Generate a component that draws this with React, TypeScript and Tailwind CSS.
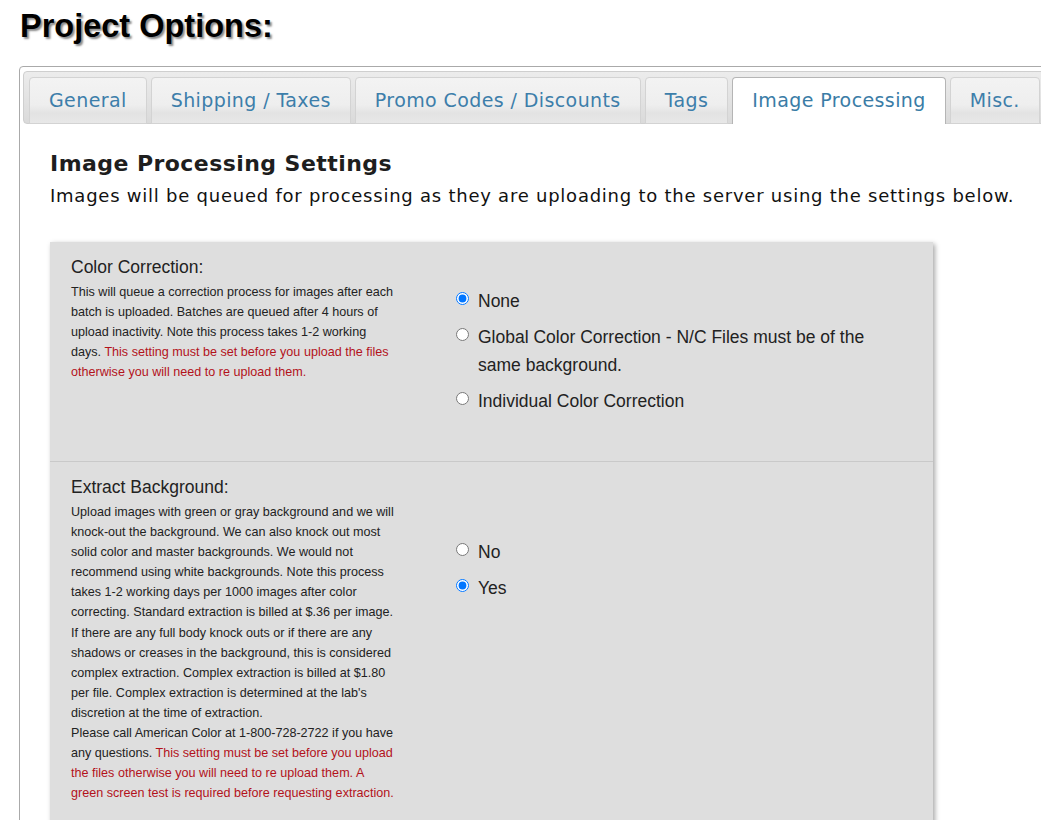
import React from "react";

const tabs = ["General", "Shipping / Taxes", "Promo Codes / Discounts", "Tags", "Image Processing", "Misc."];

function Radio({ name, label, checked }: { name: string; label: React.ReactNode; checked?: boolean }) {
  return (
    <label className="flex items-start text-[17.5px] leading-[28px] text-[#222]">
      <input type="radio" name={name} defaultChecked={checked} className="m-0 mt-[5px] mr-[9px] h-[13px] w-[13px] shrink-0" />
      <span className="max-w-[410px]">{label}</span>
    </label>
  );
}

export default function App() {
  return (
    <div className="h-[820px] overflow-hidden bg-white">
      {/* Page title */}
      <h1 className="pl-[20px] pt-[7px] font-['Liberation_Sans',Arial,sans-serif] text-[32.5px] font-bold leading-[38px] text-black [text-shadow:2px_2px_2px_#8a8a8a]">
        Project Options:
      </h1>

      {/* Tabs widget */}
      <div className="mt-[21px] ml-[19px] w-[1040px] rounded-[4px] border border-[#aaaaaa] px-[3px] pt-[4px]">
        <ul className="flex gap-[4px] rounded-[4px] border border-[#cfcfcf] bg-[linear-gradient(#ececec,#dadada)] px-[5px] pt-[5px] font-['DejaVu_Sans',Verdana,sans-serif] tracking-[0.4px]">
          {tabs.map((t) => {
            const active = t === "Image Processing";
            return (
              <li
                key={t}
                className={
                  active
                    ? "-mb-[1px] rounded-t-[4px] border border-b-0 border-[#b5b5b5] bg-white px-[19px] pt-[11px] pb-[13px] text-[19px] leading-[22px] text-[#3a7ca6]"
                    : "-mb-[1px] rounded-t-[4px] border border-[#d3d3d3] bg-[linear-gradient(#f3f3f3_0%,#eeeeee_60%,#e3e3e3_78%,#e8e8e8_100%)] px-[19px] py-[11px] text-[19px] leading-[22px] text-[#3d7eaa]"
                }
              >
                {t}
              </li>
            );
          })}
        </ul>

        {/* Panel content */}
        <div className="pl-[27px] pt-[27px]">
          <h2 className="mb-[8px] font-['DejaVu_Sans',Verdana,sans-serif] text-[22px] font-bold leading-[26px] tracking-[0.44px] text-[#1e1e1e]">
            Image Processing Settings
          </h2>
          <p className="whitespace-nowrap font-['DejaVu_Sans',Verdana,sans-serif] text-[18px] leading-[21px] tracking-[0.76px] text-[#111]">
            Images will be queued for processing as they are uploading to the server using the settings below.
          </p>

          <div className="mt-[36px] w-[883px] bg-[#dedede] font-['Liberation_Sans',Arial,sans-serif] shadow-[2px_2px_5px_rgba(0,0,0,0.35)]">
            {/* Color Correction */}
            <div className="flex min-h-[220px] border-b border-[#c9c9c9]">
              <div className="w-[406px] shrink-0 pl-[21px] pt-[15px]">
                <div className="mb-[5px] text-[17.5px] leading-[20px] text-[#222]">Color Correction:</div>
                <p className="whitespace-nowrap text-[12.6px] leading-[20px] text-[#222]">
                  This will queue a correction process for images after each<br />
                  batch is uploaded. Batches are queued after 4 hours of<br />
                  upload inactivity. Note this process takes 1-2 working<br />
                  days. <span className="text-[#b3121b]">This setting must be set before you upload the files<br />
                  otherwise you will need to re upload them.</span>
                </p>
              </div>
              <div className="flex flex-col gap-[8px] pt-[45px]">
                <Radio name="color" label="None" checked />
                <Radio name="color" label="Global Color Correction - N/C Files must be of the same background." />
                <Radio name="color" label="Individual Color Correction" />
              </div>
            </div>

            {/* Extract Background */}
            <div className="flex pb-[30px]">
              <div className="w-[406px] shrink-0 pl-[21px] pt-[15px]">
                <div className="mb-[5px] text-[17.5px] leading-[20px] text-[#222]">Extract Background:</div>
                <p className="whitespace-nowrap text-[12.6px] leading-[20.1px] text-[#222]">
                  Upload images with green or gray background and we will<br />
                  knock-out the background. We can also knock out most<br />
                  solid color and master backgrounds. We would not<br />
                  recommend using white backgrounds. Note this process<br />
                  takes 1-2 working days per 1000 images after color<br />
                  correcting. Standard extraction is billed at $.36 per image.<br />
                  If there are any full body knock outs or if there are any<br />
                  shadows or creases in the background, this is considered<br />
                  complex extraction. Complex extraction is billed at $1.80<br />
                  per file. Complex extraction is determined at the lab's<br />
                  discretion at the time of extraction.<br />
                  Please call American Color at 1-800-728-2722 if you have<br />
                  any questions. <span className="text-[#b3121b]">This setting must be set before you upload<br />
                  the files otherwise you will need to re upload them. A<br />
                  green screen test is required before requesting extraction.</span>
                </p>
              </div>
              <div className="flex flex-col gap-[8px] pt-[76px]">
                <Radio name="extract" label="No" />
                <Radio name="extract" label="Yes" checked />
              </div>
            </div>
          </div>
        </div>
      </div>
    </div>
  );
}
